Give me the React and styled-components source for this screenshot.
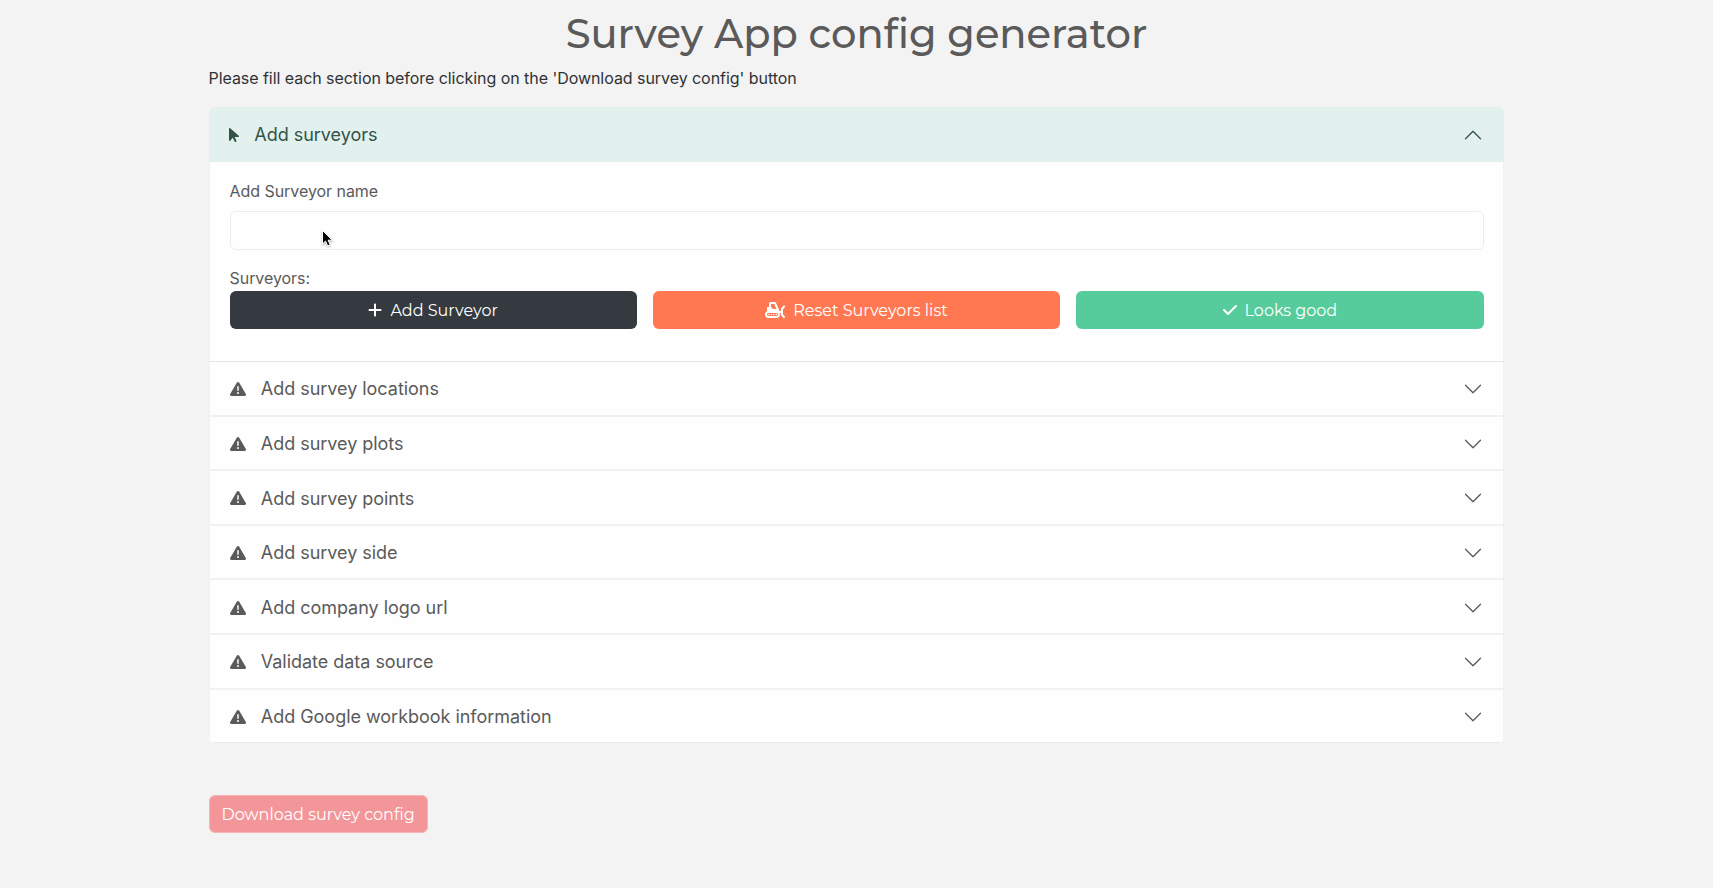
import React from 'react';
import styled, { createGlobalStyle } from 'styled-components';
import { FaArrowPointer, FaPlus, FaCheck, FaTriangleExclamation, FaSnowplow } from 'react-icons/fa6';

const Global = createGlobalStyle`
  *, *::before, *::after { box-sizing: border-box; }
  body { margin: 0; background: #f3f3f3; color: #2f3235; font-family: Inter, sans-serif; font-size: 16px; line-height: 24px; letter-spacing: -0.05px; min-height: 100vh; }
`;
const Page = styled.main`width: 1296px; margin: 0 auto; padding-top: 9px;`;
const Title = styled.h1`margin: 0 0 7px; height: 50px; text-align: center; font: 500 40px/50px Montserrat, Inter, sans-serif; letter-spacing: 0; color: #5a5a5a; white-space: nowrap;`;
const Intro = styled.p`margin: 0 0 17px;`;
const Accordion = styled.section`display: flex; flex-direction: column; width: 1295.4px; background: #fefefe; border-radius: 6px; overflow: hidden;`;
const Header = styled.button`
  display: flex; align-items: center; width: 100%; height: ${p => (p.$open ? '54.6px' : '52.6px')}; padding: ${p => (p.$open ? '1px 21px 0 20.5px' : '2px 20px 0')}; border: 0;
  background: ${p => (p.$open ? '#e2f1ed' : '#fefefe')}; color: ${p => (p.$open ? '#335348' : '#5a5a5a')};
  font: 400 18px/21.6px Inter, sans-serif; letter-spacing: -0.03px; text-align: left;
`;
const Item = styled.div`
  border: solid #f1f1f1; border-width: 0 1px 2px;
  &:last-child { border-radius: 0 0 6px 6px; border-bottom: 1px solid #e9e9e9; }
`;
const OpenItem = styled.div`border-bottom: 1px solid #e6e6e6;`;
const HeaderText = styled.span`flex: 1; margin-left: 15.3px;`;
const Panel = styled.div`padding: 17px 19.4px 32px 20px; border: solid #f1f1f1; border-width: 0 1px;`;
const Label = styled.div`color: #5a5a5a;`;
const Input = styled.input`display: block; width: 100%; height: 39px; margin: 8.4px 0 16px; padding: 6px 12px; border: 1px solid #ececec; border-radius: 6px; background: #fefefe;`;
const Buttons = styled.div`display: grid; grid-template-columns: repeat(3, 1fr); gap: 16px; margin-top: 1px;`;
const Button = styled.button`
  display: inline-flex; align-items: center; justify-content: center; gap: 8px; height: 38px; padding: 2px 13px 0;
  border: 0; border-radius: 6px; color: #fff; background: ${p => p.$color}; font: 400 16px/24px Montserrat, Inter, sans-serif;
`;
const Download = styled(Button)`margin-top: 52px; border: 1px solid #f6b4b6; padding: 1px 12px 0;`;
const Glyph = styled.span`
  display: flex; justify-content: center; width: ${p => p.$w}px; height: 16px;
  svg { flex: none; width: ${p => Math.max(p.$w, 16)}px; height: 16px; }
  ${Button} & { margin-bottom: 2px; }
`;
const PointerLayer = styled.div`position: relative;`;
const Pointer = styled.svg`position: absolute; left: 91px; top: 18px; width: 14px; height: 20px; filter: drop-shadow(0 1px 1px rgba(0, 0, 0, 0.3)); pointer-events: none;`;

const Chevron = ({ up }) => (
  <svg width="20" height="20" viewBox="0 0 16 16" fill="currentColor" transform={up ? 'rotate(180)' : undefined}>
    <path fillRule="evenodd" d="M1.646 4.646a.5.5 0 0 1 .708 0L8 10.293l5.646-5.647a.5.5 0 0 1 .708.708l-6 6a.5.5 0 0 1-.708 0l-6-6a.5.5 0 0 1 0-.708z" />
  </svg>
);
const rows = ['Add survey locations', 'Add survey plots', 'Add survey points', 'Add survey side', 'Add company logo url', 'Validate data source', 'Add Google workbook information'];

export default function App() {
  return (
    <>
      <Global />
      <Page>
        <Title>Survey App config generator</Title>
        <Intro>Please fill each section before clicking on the 'Download survey config' button</Intro>
        <Accordion>
          <OpenItem>
            <Header $open><Glyph $w={10}><FaArrowPointer /></Glyph><HeaderText>Add surveyors</HeaderText><Chevron up /></Header>
            <Panel>
              <Label>Add Surveyor name</Label>
              <PointerLayer>
                <Input />
                <Pointer viewBox="0 0 14 20">
                  <path d="M1.5 1.5V15l3.1-2.9 2.1 4.8 2.5-1.1-2.1-4.6h4.3z" fill="#000" stroke="#fff" strokeWidth="1" />
                </Pointer>
              </PointerLayer>
              <Label>Surveyors:</Label>
              <Buttons>
                <Button $color="#343a40"><Glyph $w={14}><FaPlus /></Glyph>Add Surveyor</Button>
                <Button $color="#ff7851"><Glyph $w={20}><FaSnowplow /></Glyph>Reset Surveyors list</Button>
                <Button $color="#56cc9d"><Glyph $w={14}><FaCheck /></Glyph>Looks good</Button>
              </Buttons>
            </Panel>
          </OpenItem>
          {rows.map(r => (
            <Item key={r}>
              <Header><Glyph $w={16}><FaTriangleExclamation /></Glyph><HeaderText>{r}</HeaderText><Chevron /></Header>
            </Item>
          ))}
        </Accordion>
        <Download $color="#f3969a">Download survey config</Download>
      </Page>
    </>
  );
}
